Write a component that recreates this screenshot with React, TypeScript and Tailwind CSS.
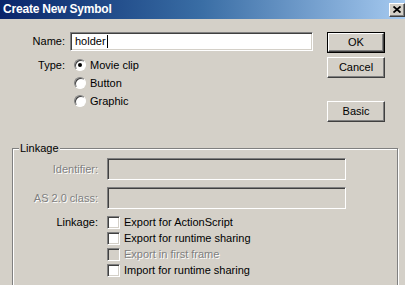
import React from 'react'

const sunken =
  'border border-t-[#808080] border-l-[#808080] border-b-white border-r-white shadow-[inset_1px_1px_0_#404040,inset_-1px_-1px_0_#d4d0c8]'
const raised =
  'border border-t-white border-l-white border-b-[#404040] border-r-[#404040] shadow-[inset_-1px_-1px_0_#808080]'
const disabledText = 'text-[#808080] [text-shadow:1px_1px_0_#fff]'

function Radio({ label, checked }: { label: string; checked?: boolean }) {
  return (
    <div className="flex h-[18px] items-center gap-[4px] pl-[4px]">
      <span className="flex h-[12px] w-[12px] items-center justify-center rounded-full border border-t-[#808080] border-l-[#808080] border-b-white border-r-white bg-white shadow-[inset_1px_1px_0_#404040]">
        {checked && <span className="h-[4px] w-[4px] rounded-full bg-black" />}
      </span>
      <span>{label}</span>
    </div>
  )
}

function Check({ label, disabled }: { label: string; disabled?: boolean }) {
  return (
    <div className="flex h-[16px] items-center gap-[4px]">
      <span className={`h-[13px] w-[13px] ${sunken} ${disabled ? 'bg-[#d4d0c8]' : 'bg-white'}`} />
      <span className={disabled ? disabledText : ''}>{label}</span>
    </div>
  )
}

function Button({ label, isDefault }: { label: string; isDefault?: boolean }) {
  return (
    <div className={isDefault ? 'border border-black' : ''}>
      <div
        className={`flex items-center justify-center bg-[#d4d0c8] ${raised} ${
          isDefault ? 'h-[19px]' : 'h-[21px]'
        }`}
      >
        {label}
      </div>
    </div>
  )
}

export default function App() {
  return (
    <div
      className="h-[285px] w-[405px] overflow-hidden bg-[#d4d0c8] text-[11px] leading-[13px] text-black"
      style={{ fontFamily: '"Liberation Sans", Arial, sans-serif' }}
    >
      <div className="flex h-[19px] items-center justify-between bg-gradient-to-r from-[#0a246a] via-[#3a6ea5] to-[#a6caf0] pl-[3px]">
        <span className="text-[12px] font-bold tracking-[-0.2px] text-white">Create New Symbol</span>
        <span className={`flex h-[14px] w-[16px] items-center justify-center bg-[#d4d0c8] ${raised}`}>
          <svg width="8" height="7" viewBox="0 0 8 7">
            <path d="M0.5 0.5 L7.5 6.5 M7.5 0.5 L0.5 6.5" stroke="#000" strokeWidth="1.8" />
          </svg>
        </span>
      </div>

      <div className="flex pt-[13px]">
        <div className="w-[327px]">
          <div className="flex items-center">
            <span className="w-[65px] text-right">Name:</span>
            <div className={`ml-[5px] flex h-[19px] w-[243px] items-center bg-white pl-[4px] ${sunken}`}>
              <span>holder</span>
              <span className="ml-[1px] h-[13px] w-[1px] bg-black" />
            </div>
          </div>
          <div className="mt-[5px] flex">
            <span className="flex h-[18px] w-[65px] items-center justify-end">Type:</span>
            <div className="ml-[5px]">
              <Radio label="Movie clip" checked />
              <Radio label="Button" />
              <Radio label="Graphic" />
            </div>
          </div>
        </div>
        <div className="flex w-[58px] flex-col">
          <Button label="OK" isDefault />
          <div className="mt-[4px]">
            <Button label="Cancel" />
          </div>
          <div className="mt-[23px]">
            <Button label="Basic" />
          </div>
        </div>
      </div>

      <fieldset className="ml-[12px] mt-[20px] h-[200px] w-[386px] border border-[#808080] px-0 pt-[3px] shadow-[inset_1px_1px_0_#fff,1px_1px_0_#fff]">
        <legend className="ml-[6px] bg-[#d4d0c8] px-[1px] leading-[13px]">Linkage</legend>
        <div className="flex items-center">
          <span className={`w-[85px] text-right ${disabledText}`}>Identifier:</span>
          <div className={`ml-[9px] h-[22px] w-[239px] ${sunken}`} />
        </div>
        <div className="mt-[7px] flex items-center">
          <span className={`w-[85px] text-right ${disabledText}`}>AS 2.0 class:</span>
          <div className={`ml-[9px] h-[22px] w-[239px] ${sunken}`} />
        </div>
        <div className="mt-[5px] flex">
          <span className="flex h-[16px] w-[85px] items-center justify-end">Linkage:</span>
          <div className="ml-[9px]">
            <Check label="Export for ActionScript" />
            <Check label="Export for runtime sharing" />
            <Check label="Export in first frame" disabled />
            <Check label="Import for runtime sharing" />
          </div>
        </div>
      </fieldset>
    </div>
  )
}
